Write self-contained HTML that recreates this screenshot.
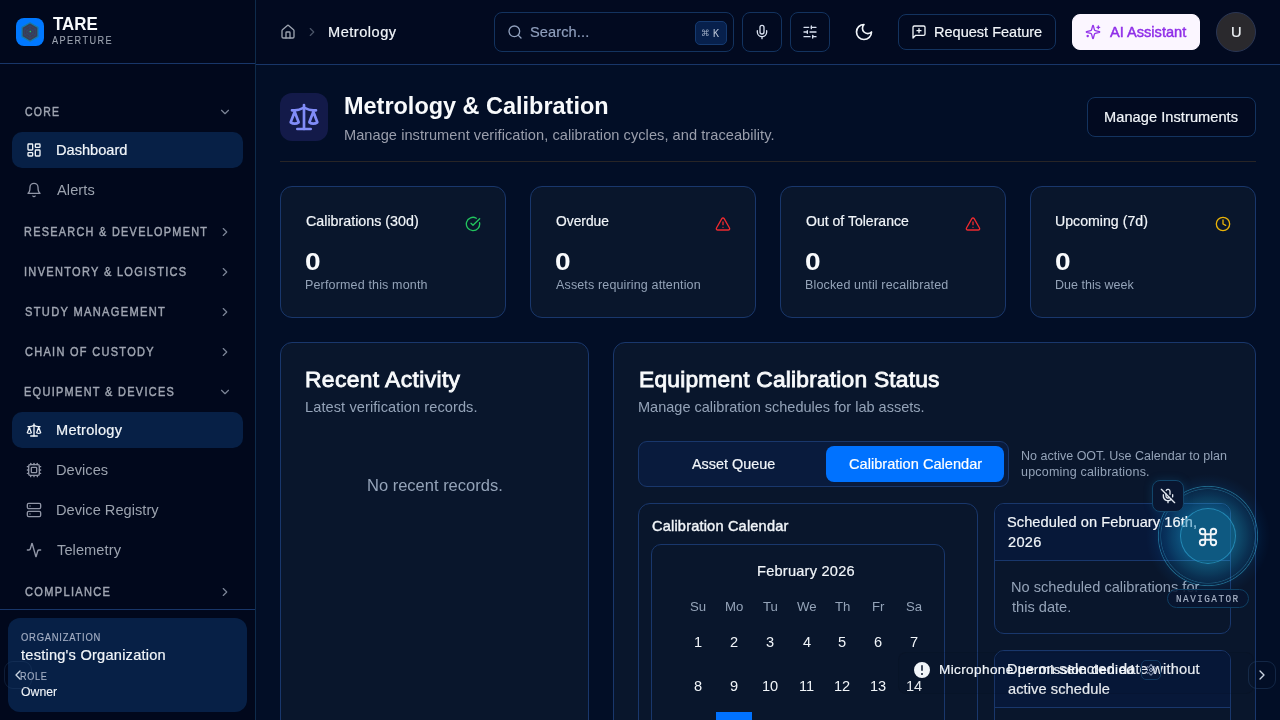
<!DOCTYPE html>
<html lang="en">
<head>
<meta charset="utf-8">
<title>Metrology &amp; Calibration - TARE Aperture</title>
<style>
*{box-sizing:border-box;margin:0;padding:0}
html,body{width:1280px;height:720px;overflow:hidden;background:#020e26;color:#f1f5f9;font-family:'Liberation Sans',Arial,sans-serif;}
body{position:relative}
div,section,aside,header,main,nav,a,button,h1,h2,h3,p,span,svg,kbd{position:absolute;display:block}
button{font:inherit;color:inherit;background:none;border:0}
.ic{fill:none;stroke:currentColor;stroke-linecap:round;stroke-linejoin:round}
.t{white-space:pre;line-height:40px;font-weight:400;will-change:transform}
.sx{position:static;display:inline-block;transform-origin:0 0}
.card{border:1px solid #19376c;border-radius:12px;background:#09162c}
.btn{border:1px solid #13335f;border-radius:8px;background:#020a20}
.nav{left:12px;width:231px;height:36px;border-radius:10px;color:#9ca3af}
.nav.on{background:#072046;color:#f1f5f9}
</style>
</head>
<body>
<aside id="sidebar" style="left:0;top:0;width:256px;height:720px;background:#01081c;border-right:1px solid #0e2b4b">
<div id="brand" style="left:0;top:0;width:255px;height:64px;border-bottom:1px solid #183669">
<div id="logo" style="left:16px;top:18px;width:28px;height:28px;border-radius:8px;background:#0078ff">
<svg style="left:0;top:0" viewBox="0 0 28 28" width="28" height="28">
<polygon points="14.00,4.80 21.97,9.40 21.97,18.60 14.00,23.20 6.03,18.60 6.03,9.40" fill="#3b3e50" stroke="#177aa8" stroke-width="1.3" stroke-linejoin="round"/>
<g fill="none" stroke="#2c4f96" stroke-width="0.6" opacity="0.55">
<polygon points="14.00,7.80 19.37,10.90 19.37,17.10 14.00,20.20 8.63,17.10 8.63,10.90"/>
<polygon points="14.00,10.40 17.12,12.20 17.12,15.80 14.00,17.60 10.88,15.80 10.88,12.20"/>
<line x1="14" y1="14" x2="14.00" y2="6.60"/><line x1="14" y1="14" x2="20.41" y2="10.30"/><line x1="14" y1="14" x2="20.41" y2="17.70"/><line x1="14" y1="14" x2="14.00" y2="21.40"/><line x1="14" y1="14" x2="7.59" y2="17.70"/><line x1="14" y1="14" x2="7.59" y2="10.30"/>
</g>
<circle cx="14.3" cy="13.6" r="0.75" fill="#1fd655"/>
</svg></div>
<div class="t" style="left:53.00px;top:4px;font-size:18.8px;color:#f8fafc;font-weight:700;"><span class="sx" style="transform:scaleX(0.8980)">TARE</span></div>
<div class="t" style="left:52.30px;top:21px;font-size:10.1px;color:#9ca3af;letter-spacing:1.600px;-webkit-text-stroke:0.1px #9ca3af;"><span class="sx" style="transform:scaleX(0.9049)">APERTURE</span></div>
</div>
<nav style="left:0;top:64px;width:255px;height:545px">
<div class="t" style="left:24.80px;top:28px;font-size:12.6px;color:#a0a6b2;letter-spacing:1.500px;-webkit-text-stroke:0.45px #a0a6b2;"><span class="sx" style="transform:scaleX(0.8321)">CORE</span></div>
<svg class="ic" style="left:218px;top:41px;width:14px;height:14px;color:#7c8597;" viewBox="0 0 24 24" stroke-width="2"><path d="m6 9 6 6 6-6"/></svg>
<a class="nav on" style="top:68px"><svg class="ic" style="left:14px;top:10px;width:16px;height:16px;color:#f1f5f9;" viewBox="0 0 24 24" stroke-width="2"><rect width="7" height="9" x="3" y="3" rx="1"/><rect width="7" height="5" x="14" y="3" rx="1"/><rect width="7" height="9" x="14" y="12" rx="1"/><rect width="7" height="5" x="3" y="16" rx="1"/></svg><div class="t" style="left:43.60px;top:-2px;font-size:14.6px;color:#f1f5f9;-webkit-text-stroke:0.2px #f1f5f9;">Dashboard</div></a>
<a class="nav" style="top:108px"><svg class="ic" style="left:14px;top:10px;width:16px;height:16px;color:#9196a7;" viewBox="0 0 24 24" stroke-width="2"><path d="M6 8a6 6 0 0 1 12 0c0 7 3 9 3 9H3s3-2 3-9"/><path d="M10.3 21a1.94 1.94 0 0 0 3.4 0"/></svg><div class="t" style="left:44.60px;top:-2px;font-size:14.6px;color:#9ca3af;letter-spacing:0.080px;">Alerts</div></a>
<div class="t" style="left:23.94px;top:148px;font-size:12.6px;color:#a0a6b2;letter-spacing:1.500px;-webkit-text-stroke:0.45px #a0a6b2;"><span class="sx" style="transform:scaleX(0.8629)">RESEARCH &amp; DEVELOPMENT</span></div>
<svg class="ic" style="left:218px;top:161px;width:14px;height:14px;color:#7c8597;" viewBox="0 0 24 24" stroke-width="2"><path d="m9 18 6-6-6-6"/></svg>
<div class="t" style="left:23.93px;top:188px;font-size:12.6px;color:#a0a6b2;letter-spacing:1.500px;-webkit-text-stroke:0.45px #a0a6b2;"><span class="sx" style="transform:scaleX(0.8750)">INVENTORY &amp; LOGISTICS</span></div>
<svg class="ic" style="left:218px;top:201px;width:14px;height:14px;color:#7c8597;" viewBox="0 0 24 24" stroke-width="2"><path d="m9 18 6-6-6-6"/></svg>
<div class="t" style="left:24.80px;top:228px;font-size:12.6px;color:#a0a6b2;letter-spacing:1.500px;-webkit-text-stroke:0.45px #a0a6b2;"><span class="sx" style="transform:scaleX(0.8814)">STUDY MANAGEMENT</span></div>
<svg class="ic" style="left:218px;top:241px;width:14px;height:14px;color:#7c8597;" viewBox="0 0 24 24" stroke-width="2"><path d="m9 18 6-6-6-6"/></svg>
<div class="t" style="left:24.80px;top:268px;font-size:12.6px;color:#a0a6b2;letter-spacing:1.500px;-webkit-text-stroke:0.45px #a0a6b2;"><span class="sx" style="transform:scaleX(0.8712)">CHAIN OF CUSTODY</span></div>
<svg class="ic" style="left:218px;top:281px;width:14px;height:14px;color:#7c8597;" viewBox="0 0 24 24" stroke-width="2"><path d="m9 18 6-6-6-6"/></svg>
<div class="t" style="left:23.93px;top:308px;font-size:12.6px;color:#a0a6b2;letter-spacing:1.500px;-webkit-text-stroke:0.45px #a0a6b2;"><span class="sx" style="transform:scaleX(0.8696)">EQUIPMENT &amp; DEVICES</span></div>
<svg class="ic" style="left:218px;top:321px;width:14px;height:14px;color:#7c8597;" viewBox="0 0 24 24" stroke-width="2"><path d="m6 9 6 6 6-6"/></svg>
<a class="nav on" style="top:348px"><svg class="ic" style="left:14px;top:10px;width:16px;height:16px;color:#f1f5f9;" viewBox="0 0 24 24" stroke-width="2"><path d="m16 16 3-8 3 8c-.87.65-1.92 1-3 1s-2.13-.35-3-1Z"/><path d="m2 16 3-8 3 8c-.87.65-1.92 1-3 1s-2.13-.35-3-1Z"/><path d="M7 21h10"/><path d="M12 3v18"/><path d="M3 7h2c2 0 5-1 7-2 2 1 5 2 7 2h2"/></svg><div class="t" style="left:43.60px;top:-2px;font-size:14.6px;color:#f1f5f9;letter-spacing:0.238px;-webkit-text-stroke:0.2px #f1f5f9;">Metrology</div></a>
<a class="nav" style="top:388px"><svg class="ic" style="left:14px;top:10px;width:16px;height:16px;color:#9196a7;" viewBox="0 0 24 24" stroke-width="2"><path d="M12 20v2"/><path d="M12 2v2"/><path d="M17 20v2"/><path d="M17 2v2"/><path d="M2 12h2"/><path d="M2 17h2"/><path d="M2 7h2"/><path d="M20 12h2"/><path d="M20 17h2"/><path d="M20 7h2"/><path d="M7 20v2"/><path d="M7 2v2"/><rect x="4" y="4" width="16" height="16" rx="2"/><rect x="8" y="8" width="8" height="8" rx="1"/></svg><div class="t" style="left:43.60px;top:-2px;font-size:14.6px;color:#9ca3af;letter-spacing:0.033px;">Devices</div></a>
<a class="nav" style="top:428px"><svg class="ic" style="left:14px;top:10px;width:16px;height:16px;color:#9196a7;" viewBox="0 0 24 24" stroke-width="2"><rect width="20" height="8" x="2" y="2" rx="2" ry="2"/><rect width="20" height="8" x="2" y="14" rx="2" ry="2"/><line x1="6" x2="6.01" y1="6" y2="6"/><line x1="6" x2="6.01" y1="18" y2="18"/></svg><div class="t" style="left:43.60px;top:-2px;font-size:14.6px;color:#9ca3af;letter-spacing:0.029px;">Device Registry</div></a>
<a class="nav" style="top:468px"><svg class="ic" style="left:14px;top:10px;width:16px;height:16px;color:#9196a7;" viewBox="0 0 24 24" stroke-width="2"><path d="M22 12h-2.48a2 2 0 0 0-1.93 1.46l-2.35 8.36a.25.25 0 0 1-.48 0L9.24 2.18a.25.25 0 0 0-.48 0l-2.35 8.36A2 2 0 0 1 4.49 12H2"/></svg><div class="t" style="left:44.60px;top:-2px;font-size:14.6px;color:#9ca3af;letter-spacing:0.087px;">Telemetry</div></a>
<div class="t" style="left:24.80px;top:508px;font-size:12.6px;color:#a0a6b2;letter-spacing:1.500px;-webkit-text-stroke:0.45px #a0a6b2;"><span class="sx" style="transform:scaleX(0.8777)">COMPLIANCE</span></div>
<svg class="ic" style="left:218px;top:521px;width:14px;height:14px;color:#7c8597;" viewBox="0 0 24 24" stroke-width="2"><path d="m9 18 6-6-6-6"/></svg>
</nav>
<div id="sfoot" style="left:0;top:609px;width:255px;height:111px;border-top:1px solid #183669">
<div id="org" style="left:8px;top:8px;width:239px;height:94px;border-radius:12px;background:#072046">
<div class="t" style="left:12.50px;top:0px;font-size:10px;color:#a3aec4;letter-spacing:0.800px;-webkit-text-stroke:0.15px #a3aec4;"><span class="sx" style="transform:scaleX(0.9427)">ORGANIZATION</span></div>
<div class="t" style="left:12.50px;top:17px;font-size:14.6px;color:#f1f5f9;letter-spacing:0.229px;-webkit-text-stroke:0.2px #f1f5f9;">testing's Organization</div>
<div class="t" style="left:11.59px;top:39px;font-size:10px;color:#a3aec4;letter-spacing:0.800px;-webkit-text-stroke:0.15px #a3aec4;"><span class="sx" style="transform:scaleX(0.9085)">ROLE</span></div>
<div class="t" style="left:12.50px;top:54px;font-size:12.6px;color:#f1f5f9;-webkit-text-stroke:0.1px #f1f5f9;"><span class="sx" style="transform:scaleX(0.9730)">Owner</span></div>
</div>
</div>
<button style="left:4px;top:661px;width:28px;height:28px;border-radius:9px;border:1px solid rgba(40,70,110,.35)"><svg class="ic" style="left:5px;top:5px;width:16px;height:16px;color:#cbd5e1;" viewBox="0 0 24 24" stroke-width="2"><path d="m15 18-6-6 6-6"/></svg></button>
</aside>

<header id="topbar" style="left:256px;top:0;width:1024px;height:65px;background:#020a20;border-bottom:1px solid #183669">
<svg class="ic" style="left:24px;top:24px;width:16px;height:16px;color:#9ca3af;" viewBox="0 0 24 24" stroke-width="2"><path d="M15 21v-8a1 1 0 0 0-1-1h-4a1 1 0 0 0-1 1v8"/><path d="M3 10a2 2 0 0 1 .709-1.528l7-5.999a2 2 0 0 1 2.582 0l7 5.999A2 2 0 0 1 21 10v9a2 2 0 0 1-2 2H5a2 2 0 0 1-2-2z"/></svg>
<svg class="ic" style="left:49px;top:25px;width:14px;height:14px;color:#4b5568;" viewBox="0 0 24 24" stroke-width="2"><path d="m9 18 6-6-6-6"/></svg>
<div class="t" style="left:71.50px;top:12px;font-size:14.6px;color:#f1f5f9;letter-spacing:0.500px;-webkit-text-stroke:0.2px #f1f5f9;">Metrology</div>
<div class="btn" style="left:238px;top:12px;width:240px;height:40px"><svg class="ic" style="left:12px;top:11px;width:16px;height:16px;color:#91a1be;" viewBox="0 0 24 24" stroke-width="2"><circle cx="11" cy="11" r="8"/><path d="m21 21-4.3-4.3"/></svg><div class="t" style="left:35.00px;top:-1px;font-size:14.6px;color:#8f9fbd;letter-spacing:0.100px;-webkit-text-stroke:0.2px #8f9fbd;">Search...</div><kbd style="left:200px;top:8px;width:32px;height:24px;border-radius:5px;background:#07204c;border:1px solid #153a70"><div class="t" style="left:5.20px;top:-9px;font-size:8.4px;color:#a3b1c9;font-family:'DejaVu Sans','Liberation Sans',sans-serif;">⌘</div><div class="t" style="left:17.30px;top:-8px;font-size:10px;color:#b4bfd2;">K</div></kbd></div>
<button class="btn" style="left:486px;top:12px;width:40px;height:40px"><svg class="ic" style="left:11px;top:11px;width:16px;height:16px;color:#d8e0ef;" viewBox="0 0 24 24" stroke-width="2"><path d="M12 2a3 3 0 0 0-3 3v7a3 3 0 0 0 6 0V5a3 3 0 0 0-3-3Z"/><path d="M19 10v2a7 7 0 0 1-14 0v-2"/><line x1="12" x2="12" y1="19" y2="22"/></svg></button>
<button class="btn" style="left:534px;top:12px;width:40px;height:40px"><svg class="ic" style="left:11px;top:11px;width:16px;height:16px;color:#d8e0ef;" viewBox="0 0 24 24" stroke-width="2"><path d="M10 5H3"/><path d="M12 19H3"/><path d="M14 3v4"/><path d="M16 17v4"/><path d="M21 12h-9"/><path d="M21 19h-5"/><path d="M21 5h-7"/><path d="M8 10v4"/><path d="M8 12H3"/></svg></button>
<svg class="ic" style="left:598px;top:22px;width:20px;height:20px;color:#f1f5f9;" viewBox="0 0 24 24" stroke-width="2"><path d="M12 3a6 6 0 0 0 9 9 9 9 0 1 1-9-9Z"/></svg>
<button class="btn" style="left:642px;top:14px;width:158px;height:36px"><svg class="ic" style="left:12px;top:9px;width:16px;height:16px;color:#f1f5f9;" viewBox="0 0 24 24" stroke-width="2"><path d="M21 15a2 2 0 0 1-2 2H7l-4 4V5a2 2 0 0 1 2-2h14a2 2 0 0 1 2 2z"/><path d="M12 7v6"/><path d="M9 10h6"/></svg><div class="t" style="left:35.00px;top:-3px;font-size:14.6px;color:#f1f5f9;-webkit-text-stroke:0.2px #f1f5f9;"><span class="sx" style="transform:scaleX(0.9953)">Request Feature</span></div></button>
<button class="btn" style="left:816px;top:14px;width:128px;height:36px;background:#fbf6ff;border-color:#fbf6ff"><svg class="ic" style="left:12px;top:9px;width:16px;height:16px;color:#9333ea;" viewBox="0 0 24 24" stroke-width="2"><path d="M9.937 15.5A2 2 0 0 0 8.5 14.063l-6.135-1.582a.5.5 0 0 1 0-.962L8.5 9.936A2 2 0 0 0 9.937 8.5l1.582-6.135a.5.5 0 0 1 .963 0L14.063 8.5A2 2 0 0 0 15.5 9.937l6.135 1.581a.5.5 0 0 1 0 .964L15.5 14.063a2 2 0 0 0-1.437 1.437l-1.582 6.135a.5.5 0 0 1-.963 0z"/><path d="M20 3v4"/><path d="M22 5h-4"/><path d="M4 17v2"/><path d="M5 18H3"/></svg><div class="t" style="left:36.80px;top:-3px;font-size:14.6px;color:#8f2de8;-webkit-text-stroke:0.45px #8f2de8;">AI Assistant</div></button>
<div style="left:960px;top:12px;width:40px;height:40px;border-radius:50%;background:#2a292d;border:1px solid #2a3654"><div class="t" style="left:13.60px;top:-1px;font-size:14.6px;color:#f1f5f9;-webkit-text-stroke:0.2px #f1f5f9;">U</div></div>
</header>

<main id="main" style="left:256px;top:65px;width:1024px;height:655px">
<div style="left:24px;top:28px;width:48px;height:48px;border-radius:12px;background:#131a49"><svg class="ic" style="left:8px;top:8px;width:32px;height:32px;color:#818cf8;" viewBox="0 0 24 24" stroke-width="2"><path d="m16 16 3-8 3 8c-.87.65-1.92 1-3 1s-2.13-.35-3-1Z"/><path d="m2 16 3-8 3 8c-.87.65-1.92 1-3 1s-2.13-.35-3-1Z"/><path d="M7 21h10"/><path d="M12 3v18"/><path d="M3 7h2c2 0 5-1 7-2 2 1 5 2 7 2h2"/></svg></div>
<h1 class="t" style="left:87.52px;top:21px;font-size:24px;color:#f8fafc;font-weight:700;"><span class="sx" style="transform:scaleX(0.9776)">Metrology &amp; Calibration</span></h1>
<p class="t" style="left:87.50px;top:50px;font-size:14.6px;color:#9a9eac;letter-spacing:0.049px;">Manage instrument verification, calibration cycles, and traceability.</p>
<button class="btn" style="left:831px;top:32px;width:169px;height:40px"><div class="t" style="left:15.50px;top:-1px;font-size:14.6px;color:#f1f5f9;letter-spacing:0.059px;-webkit-text-stroke:0.2px #f1f5f9;">Manage Instruments</div></button>
<div style="left:24px;top:96px;width:976px;height:1px;background:#282526"></div>
<section class="card" style="left:24px;top:121px;width:226px;height:132px"><div class="t" style="left:24.80px;top:14px;font-size:14.6px;color:#f1f5f9;-webkit-text-stroke:0.2px #f1f5f9;"><span class="sx" style="transform:scaleX(0.9781)">Calibrations (30d)</span></div><svg class="ic" style="left:184px;top:29px;width:16px;height:16px;color:#22c55e;" viewBox="0 0 24 24" stroke-width="2"><path d="M21.801 10A10 10 0 1 1 17 3.335"/><path d="m9 11 3 3L22 4"/></svg><div class="t" style="left:24.20px;top:55px;font-size:23.4px;color:#f8fafc;font-weight:700;"><span class="sx" style="transform:scaleX(1.2000)">0</span></div><div class="t" style="left:23.80px;top:78px;font-size:12.5px;color:#94a3b8;letter-spacing:0.158px;">Performed this month</div></section>
<section class="card" style="left:274px;top:121px;width:226px;height:132px"><div class="t" style="left:24.80px;top:14px;font-size:14.6px;color:#f1f5f9;-webkit-text-stroke:0.2px #f1f5f9;"><span class="sx" style="transform:scaleX(0.9455)">Overdue</span></div><svg class="ic" style="left:184px;top:29px;width:16px;height:16px;color:#ee2a2f;" viewBox="0 0 24 24" stroke-width="2"><path d="m21.73 18-8-14a2 2 0 0 0-3.48 0l-8 14A2 2 0 0 0 4 21h16a2 2 0 0 0 1.73-3"/><path d="M12 9v4"/><path d="M12 17h.01"/></svg><div class="t" style="left:24.20px;top:55px;font-size:23.4px;color:#f8fafc;font-weight:700;"><span class="sx" style="transform:scaleX(1.2000)">0</span></div><div class="t" style="left:24.80px;top:78px;font-size:12.5px;color:#94a3b8;letter-spacing:0.144px;">Assets requiring attention</div></section>
<section class="card" style="left:524px;top:121px;width:226px;height:132px"><div class="t" style="left:24.80px;top:14px;font-size:14.6px;color:#f1f5f9;-webkit-text-stroke:0.2px #f1f5f9;"><span class="sx" style="transform:scaleX(0.9623)">Out of Tolerance</span></div><svg class="ic" style="left:184px;top:29px;width:16px;height:16px;color:#ee2a2f;" viewBox="0 0 24 24" stroke-width="2"><path d="m21.73 18-8-14a2 2 0 0 0-3.48 0l-8 14A2 2 0 0 0 4 21h16a2 2 0 0 0 1.73-3"/><path d="M12 9v4"/><path d="M12 17h.01"/></svg><div class="t" style="left:24.20px;top:55px;font-size:23.4px;color:#f8fafc;font-weight:700;"><span class="sx" style="transform:scaleX(1.2000)">0</span></div><div class="t" style="left:23.80px;top:78px;font-size:12.5px;color:#94a3b8;letter-spacing:0.144px;">Blocked until recalibrated</div></section>
<section class="card" style="left:774px;top:121px;width:226px;height:132px"><div class="t" style="left:23.83px;top:14px;font-size:14.6px;color:#f1f5f9;-webkit-text-stroke:0.2px #f1f5f9;"><span class="sx" style="transform:scaleX(0.9702)">Upcoming (7d)</span></div><svg class="ic" style="left:184px;top:29px;width:16px;height:16px;color:#eab308;" viewBox="0 0 24 24" stroke-width="2"><circle cx="12" cy="12" r="10"/><polyline points="12 6 12 12 16 14"/></svg><div class="t" style="left:24.20px;top:55px;font-size:23.4px;color:#f8fafc;font-weight:700;"><span class="sx" style="transform:scaleX(1.2000)">0</span></div><div class="t" style="left:23.80px;top:78px;font-size:12.5px;color:#94a3b8;letter-spacing:0.017px;">Due this week</div></section>
<section class="card" style="left:24px;top:277px;width:309px;height:400px"><h2 class="t" style="left:23.80px;top:16px;font-size:22.8px;color:#f8fafc;letter-spacing:0.393px;-webkit-text-stroke:0.85px #f8fafc;">Recent Activity</h2><p class="t" style="left:23.80px;top:44px;font-size:14.6px;color:#94a3b8;letter-spacing:0.081px;">Latest verification records.</p><p class="t" style="left:85.51px;top:123px;font-size:16.7px;color:#94a3b8;"><span class="sx" style="transform:scaleX(0.9889)">No recent records.</span></p></section>
<section class="card" style="left:357px;top:277px;width:643px;height:400px">
<h2 class="t" style="left:25.00px;top:16px;font-size:22.8px;color:#f8fafc;letter-spacing:0.193px;-webkit-text-stroke:0.85px #f8fafc;">Equipment Calibration Status</h2>
<p class="t" style="left:23.80px;top:44px;font-size:14.6px;color:#94a3b8;"><span class="sx" style="transform:scaleX(0.9951)">Manage calibration schedules for lab assets.</span></p>
<div style="left:24px;top:98px;width:371px;height:46px;border:1px solid #19376c;border-radius:9px;background:#091b3d"><div class="t" style="left:52.50px;top:2px;font-size:14.4px;color:#f1f5f9;-webkit-text-stroke:0.2px #f1f5f9;">Asset Queue</div><div style="left:187px;top:4px;width:178px;height:36px;border-radius:8px;background:#0072ff"><div class="t" style="left:23.20px;top:-2px;font-size:14.6px;color:#ffffff;letter-spacing:0.005px;-webkit-text-stroke:0.2px #ffffff;">Calibration Calendar</div></div></div>
<p class="t" style="left:407.00px;top:93px;font-size:12.5px;color:#94a3b8;letter-spacing:0.006px;">No active OOT. Use Calendar to plan</p>
<p class="t" style="left:407.00px;top:109px;font-size:12.5px;color:#94a3b8;letter-spacing:0.200px;">upcoming calibrations.</p>
<div class="card" style="left:24px;top:160px;width:340px;height:260px;background:transparent">
<h3 class="t" style="left:13.00px;top:2px;font-size:14.6px;color:#f1f5f9;letter-spacing:0.174px;-webkit-text-stroke:0.4px #f1f5f9;">Calibration Calendar</h3>
<div class="card" style="left:12px;top:40px;width:294px;height:240px;border-radius:10px;background:transparent">
<div class="t" style="left:105.30px;top:6px;font-size:14.6px;color:#f1f5f9;letter-spacing:0.225px;-webkit-text-stroke:0.2px #f1f5f9;">February 2026</div>
<div class="t" style="left:38.30px;top:42px;font-size:13.2px;color:#94a3b8;">Su</div><div class="t" style="left:72.80px;top:42px;font-size:13.2px;color:#94a3b8;">Mo</div><div class="t" style="left:111.30px;top:42px;font-size:13.2px;color:#94a3b8;">Tu</div><div class="t" style="left:144.80px;top:42px;font-size:13.2px;color:#94a3b8;">We</div><div class="t" style="left:182.80px;top:42px;font-size:13.2px;color:#94a3b8;">Th</div><div class="t" style="left:219.80px;top:42px;font-size:13.2px;color:#94a3b8;">Fr</div><div class="t" style="left:253.80px;top:42px;font-size:13.2px;color:#94a3b8;">Sa</div>
<div class="t" style="left:42.00px;top:77px;font-size:14.6px;color:#f1f5f9;">1</div><div class="t" style="left:78.00px;top:77px;font-size:14.6px;color:#f1f5f9;">2</div><div class="t" style="left:114.00px;top:77px;font-size:14.6px;color:#f1f5f9;">3</div><div class="t" style="left:150.50px;top:77px;font-size:14.6px;color:#f1f5f9;">4</div><div class="t" style="left:186.00px;top:77px;font-size:14.6px;color:#f1f5f9;">5</div><div class="t" style="left:222.00px;top:77px;font-size:14.6px;color:#f1f5f9;">6</div><div class="t" style="left:258.00px;top:77px;font-size:14.6px;color:#f1f5f9;">7</div>
<div class="t" style="left:42.00px;top:121px;font-size:14.6px;color:#f1f5f9;">8</div><div class="t" style="left:78.00px;top:121px;font-size:14.6px;color:#f1f5f9;">9</div><div class="t" style="left:110.00px;top:121px;font-size:14.6px;color:#f1f5f9;">10</div><div class="t" style="left:146.50px;top:121px;font-size:14.6px;color:#f1f5f9;">11</div><div class="t" style="left:182.00px;top:121px;font-size:14.6px;color:#f1f5f9;">12</div><div class="t" style="left:218.00px;top:121px;font-size:14.6px;color:#f1f5f9;">13</div><div class="t" style="left:254.00px;top:121px;font-size:14.6px;color:#f1f5f9;">14</div>
<div style="left:64px;top:167px;width:36px;height:36px;background:#0072ff"></div>
</div>
</div>
<div class="card" style="left:380px;top:160px;width:237px;height:131px;border-radius:10px;background:transparent;overflow:hidden"><div style="left:0;top:0;width:235px;height:57px;border-bottom:1px solid #19376c;background:#071839"></div><h3 class="t" style="left:12.00px;top:-2px;font-size:14.6px;color:#f1f5f9;letter-spacing:0.069px;-webkit-text-stroke:0.2px #f1f5f9;">Scheduled on February 16th,</h3><div class="t" style="left:13.00px;top:18px;font-size:14.6px;color:#f1f5f9;letter-spacing:0.267px;-webkit-text-stroke:0.2px #f1f5f9;">2026</div><p class="t" style="left:15.80px;top:63px;font-size:14.6px;color:#94a3b8;letter-spacing:0.007px;">No scheduled calibrations for</p><p class="t" style="left:16.80px;top:83px;font-size:14.6px;color:#94a3b8;">this date.</p></div>
<div class="card" style="left:380px;top:307px;width:237px;height:131px;border-radius:10px;background:transparent;overflow:hidden"><div style="left:0;top:0;width:235px;height:57px;border-bottom:1px solid #19376c;background:#071839"></div><h3 class="t" style="left:12.00px;top:-2px;font-size:14.6px;color:#f1f5f9;letter-spacing:0.159px;-webkit-text-stroke:0.2px #f1f5f9;">Due on selected date without</h3><div class="t" style="left:13.00px;top:18px;font-size:14.6px;color:#f1f5f9;letter-spacing:0.093px;-webkit-text-stroke:0.2px #f1f5f9;">active schedule</div></div>
</section>
</main>

<div id="nav-glow" style="left:1146px;top:474px;width:124px;height:124px;border-radius:50%;mix-blend-mode:screen;background:radial-gradient(circle closest-side,rgb(4,40,40) 0%,rgb(4,40,40) 44.500%,rgb(6,60,82) 45.500%,rgb(3,44,62) 58%,rgb(1,29,46) 68%,rgb(0,21,36) 75%,rgb(16,66,88) 76%,rgb(0,21,35) 77.500%,rgb(0,19,33) 79%,rgb(24,92,116) 80%,rgb(0,11,20) 81.500%,rgb(0,5,10) 89%,rgb(0,0,0) 100%)"></div>
<div id="nav-orb" style="left:1180px;top:508px;width:56px;height:56px;border-radius:50%;border:1px solid rgba(44,158,205,.7);background:rgba(18,125,180,.45)"><svg class="ic" style="left:16px;top:17px;width:22px;height:22px;color:#f1f5f9;" viewBox="0 0 24 24" stroke-width="2"><path d="M15 6v12a3 3 0 1 0 3-3H6a3 3 0 1 0 3 3V6a3 3 0 1 0-3 3h12a3 3 0 1 0-3-3"/></svg></div>
<button style="left:1152px;top:480px;width:32px;height:32px;border-radius:8px;background:#091630;border:1px solid #12466b;box-shadow:0 0 8px rgba(18,100,150,.3)"><svg class="ic" style="left:7px;top:7px;width:16px;height:16px;color:#e2e8f0;" viewBox="0 0 24 24" stroke-width="2"><line x1="2" x2="22" y1="2" y2="22"/><path d="M18.89 13.23A7.12 7.12 0 0 0 19 12v-2"/><path d="M5 10v2a7 7 0 0 0 12 5"/><path d="M15 9.34V5a3 3 0 0 0-5.68-1.33"/><path d="M9 9v3a3 3 0 0 0 5.12 2.12"/><line x1="12" x2="12" y1="19" y2="22"/></svg></button>
<div style="left:1167px;top:589px;width:82px;height:19px;border-radius:10px;background:rgba(8,22,48,.88);border:1px solid #0f3f63"><div class="t" style="left:7.95px;top:-11px;font-size:11px;color:#a9b4c8;letter-spacing:1.700px;-webkit-text-stroke:0.15px #a9b4c8;font-family:'Liberation Mono',monospace;"><span class="sx" style="transform:scaleX(0.8520)">NAVIGATOR</span></div></div>
<div id="toast" style="left:898px;top:652px;width:356px;height:42px;border-radius:8px;background:rgba(2,6,20,.04);border:1px solid rgba(2,6,20,.1)"><svg style="left:13px;top:7px;width:20px;height:20px" viewBox="0 0 20 20"><path fill="#f1f5f9" fill-rule="evenodd" d="M18 10a8 8 0 11-16 0 8 8 0 0116 0zm-8-5a.75.75 0 01.75.75v4.500a.75.75 0 01-1.500 0v-4.500A.75.75 0 0110 5zm0 10a1 1 0 100-2 1 1 0 000 2z" clip-rule="evenodd"/></svg><div class="t" style="left:40.20px;top:-3px;font-size:13.6px;color:#f1f5f9;letter-spacing:0.363px;-webkit-text-stroke:0.2px #f1f5f9;">Microphone permission denied</div><button style="left:242px;top:7px;width:20px;height:20px;border-radius:5px;border:1px solid #113860"><svg class="ic" style="left:3px;top:3px;width:12px;height:12px;color:#a6b4d0;" viewBox="0 0 24 24" stroke-width="2"><path d="M12.22 2h-.44a2 2 0 0 0-2 2v.18a2 2 0 0 1-1 1.73l-.43.25a2 2 0 0 1-2 0l-.15-.08a2 2 0 0 0-2.73.73l-.22.38a2 2 0 0 0 .73 2.73l.15.1a2 2 0 0 1 1 1.72v.51a2 2 0 0 1-1 1.74l-.15.09a2 2 0 0 0-.73 2.73l.22.38a2 2 0 0 0 2.73.73l.15-.08a2 2 0 0 1 2 0l.43.25a2 2 0 0 1 1 1.73V20a2 2 0 0 0 2 2h.44a2 2 0 0 0 2-2v-.18a2 2 0 0 1 1-1.73l.43-.25a2 2 0 0 1 2 0l.15.08a2 2 0 0 0 2.730-.73l.22-.39a2 2 0 0 0-.73-2.73l-.15-.08a2 2 0 0 1-1-1.74v-.5a2 2 0 0 1 1-1.74l.15-.09a2 2 0 0 0 .73-2.73l-.22-.38a2 2 0 0 0-2.73-.73l-.15.08a2 2 0 0 1-2 0l-.43-.25a2 2 0 0 1-1-1.73V4a2 2 0 0 0-2-2z"/><circle cx="12" cy="12" r="3"/></svg></button></div>
<button style="left:1248px;top:661px;width:28px;height:28px;border-radius:9px;border:1px solid rgba(40,70,110,.45)"><svg class="ic" style="left:5px;top:5px;width:16px;height:16px;color:#cbd5e1;" viewBox="0 0 24 24" stroke-width="2"><path d="m9 18 6-6-6-6"/></svg></button>
</body>
</html>
